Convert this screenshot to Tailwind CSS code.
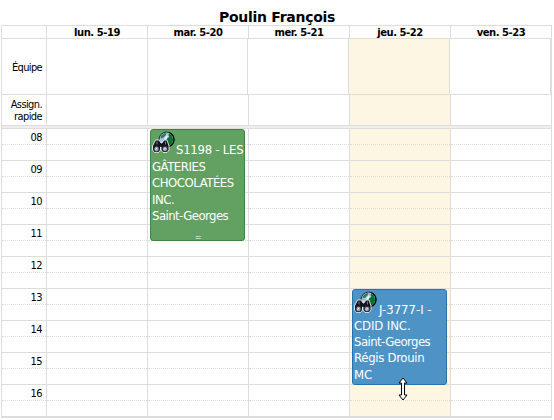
<!DOCTYPE html>
<html lang="fr">
<head>
  <meta charset="UTF-8" />
  <meta name="viewport" content="width=device-width, initial-scale=1.0" />
  <title>Poulin François</title>
  <script src="https://cdn.jsdelivr.net/npm/@tailwindcss/browser@4"></script>
  <style>
    body { font-family: 'DejaVu Sans Condensed', 'DejaVu Sans', sans-serif; font-stretch: condensed; }
    h1, .days { font-family: 'DejaVu Sans', sans-serif; font-stretch: normal; }
  </style>
</head>
<body class="w-[554px] h-[420px] overflow-hidden bg-white text-black">
  <!-- Globe + binoculars, shared by the events -->
  <svg class="hidden">
    <symbol id="client" viewBox="0 0 24 23">
      <circle cx="14.500" cy="8.500" r="7.500" fill="#a6c4dc" stroke="#1c2b3a" />
      <path d="M8.500 5.500l3-3 3-.5-1 2.500-2 2-2.500 1z" fill="#2d7d57" />
      <path d="M12 7l3-3 1 2-2 3z" fill="#e3f0f8" />
      <path d="M17 2.500l3 2 1.200 4-.7 3.500-3.500 3-1.500-1 .5-3-2-1.500 1.500-2.500 2-1-1-1.500z" fill="#08702f" />
      <path d="M17 1.500c3.500 1.500 5 4 5 7s-2 6-5 7" fill="none" stroke="#000" stroke-width="1.200" />
      <path d="M3.500 9h3.500l2 3h1l2-3h3l2 6v4l-2 2.500h-4l-2-2.500v-3H8.500v3l-2 2.500H2.500l-2-2.500v-4z" fill="#14141c" stroke="#fff" stroke-width=".8" />
      <ellipse cx="4.500" cy="18" rx="2.600" ry="2.700" fill="#9da2bd" stroke="#22222e" stroke-width=".8" />
      <ellipse cx="13" cy="18" rx="2.600" ry="2.700" fill="#9da2bd" stroke="#22222e" stroke-width=".8" />
      <path d="M3.500 18.500l1.500-1.500M12 18.500l1.500-1.500" stroke="#fff" />
      <path d="M5 10.500v3M13.500 10.500v3" stroke="#777b99" />
    </symbol>
  </svg>

  <h1 class="h-[25px] pt-[5px] text-center text-[14px] leading-6 font-bold tracking-[-0.28px]">Poulin François</h1>

  <div class="ml-px w-[551px] border-l border-t border-[#ddd]">
    <!-- Days -->
    <div class="days grid grid-cols-[45px_repeat(5,101px)] h-[13px] text-center text-[10px] leading-[13px] font-bold tracking-[-0.45px] border-b border-[#ddd]">
      <div class="border-r border-[#ddd]"></div>
      <div class="border-r border-[#ddd]">lun. 5-19</div>
      <div class="border-r border-[#ddd]">mar. 5-20</div>
      <div class="border-r border-[#ddd]">mer. 5-21</div>
      <div class="border-r border-[#ddd]">jeu. 5-22</div>
      <div class="border-r border-[#ddd]">ven. 5-23</div>
    </div>

    <!-- Team -->
    <div class="grid grid-cols-[45px_101px_100px_101px_101px_101px_1px] h-14 border-b border-[#ddd]">
      <div class="flex items-center justify-end pr-1 pt-[3px] border-r border-[#ddd] text-[11px] tracking-[-0.65px]">Équipe</div>
      <div class="border-r border-[#ddd]"></div>
      <div class="border-r border-[#ddd]"></div>
      <div class="border-r border-[#ddd]"></div>
      <div class="border-r border-[#ddd] bg-[#fdf6e3]"></div>
      <div class="border-r border-[#ddd]"></div>
      <div class="bg-[#ddd]"></div>
    </div>

    <!-- Quick assignment -->
    <div class="grid grid-cols-[45px_repeat(5,101px)] h-[31px] border-b border-[#ddd]">
      <div class="pt-1 pr-1 border-r border-[#ddd] text-right text-[11px] leading-3 tracking-[-0.6px]">Assign.<br />rapide</div>
      <div class="border-r border-[#ddd]"></div>
      <div class="border-r border-[#ddd]"></div>
      <div class="border-r border-[#ddd]"></div>
      <div class="border-r border-[#ddd] bg-[#fdf6e3]"></div>
      <div class="border-r border-[#ddd]"></div>
    </div>

    <div class="h-[3px] bg-[#eee] border-b border-r border-[#ddd]"></div>

    <!-- Hours -->
    <div class="grid grid-cols-[45px_repeat(5,101px)] h-[289px] border-b border-[#ddd]">
      <div id="hours" class="border-r border-[#ddd]"></div>
      <div class="slots border-r border-[#ddd]"></div>
      <div class="relative border-r border-[#ddd]">
        <div class="slots"></div>
        <div class="absolute left-[2px] top-0 w-[95px] h-[112px] rounded-[3px] border border-[#3c8440] bg-[#62a162] pl-px text-[13px] leading-[16.400px] tracking-[-0.45px] text-white whitespace-nowrap">
          <div class="flex h-[29px]">
            <svg class="w-6 h-[23px] mt-px shrink-0"><use href="#client" /></svg>
            <span class="pt-[12px] tracking-[-0.25px]">S1198 - LES</span>
          </div>
          <div>GÂTERIES</div>
          <div>CHOCOLATÉES</div>
          <div>INC.</div>
          <div class="tracking-[-0.55px]">Saint-Georges</div>
          <div class="pt-[5px] text-center text-[9px] leading-[14px]">=</div>
        </div>
      </div>
      <div class="slots border-r border-[#ddd]"></div>
      <div class="relative border-r border-[#ddd] bg-[#fdf6e3]">
        <div class="slots"></div>
        <div class="absolute left-[2px] top-[160px] w-[95px] h-24 rounded-[3px] border border-[#2473af] bg-[#4e93c6] pl-px text-[13px] leading-4 text-white whitespace-nowrap">
          <div class="flex h-7">
            <svg class="w-6 h-[23px] mt-px shrink-0"><use href="#client" /></svg>
            <span class="pt-[12px] pl-px">J-3777-I -</span>
          </div>
          <div class="tracking-[-0.1px]">CDID INC.</div>
          <div class="tracking-[-0.55px]">Saint-Georges</div>
          <div class="tracking-[-0.3px]">Régis Drouin</div>
          <div class="pt-px">MC</div>
        </div>
        <!-- Resize pointer -->
        <svg class="absolute left-[48px] top-[248px] w-[10px] h-[24px]" viewBox="0 0 10 24">
          <path d="M5 1l4 5H6.500v12H9l-4 5-4-5h2.500V6H1z" fill="#fff" stroke="#000" />
        </svg>
      </div>
      <div class="slots border-r border-[#ddd]"></div>
    </div>
  </div>

  <script>
    const first = 8;
    const last = 16;

    function slot(label) {
      return `<div class="h-4 border-b border-dotted border-[#ddd] pr-1 text-right text-[11px] leading-[18px] tracking-[-0.5px]">${label}</div>
        <div class="h-4 border-b border-[#ddd]"></div>`;
    }

    for (let h = first; h <= last; h++) {
      document.getElementById('hours').innerHTML += slot(String(h).padStart(2, '0'));
      document.querySelectorAll('.slots').forEach(col => {
        col.innerHTML += slot('');
      });
    }
  </script>
</body>
</html>
